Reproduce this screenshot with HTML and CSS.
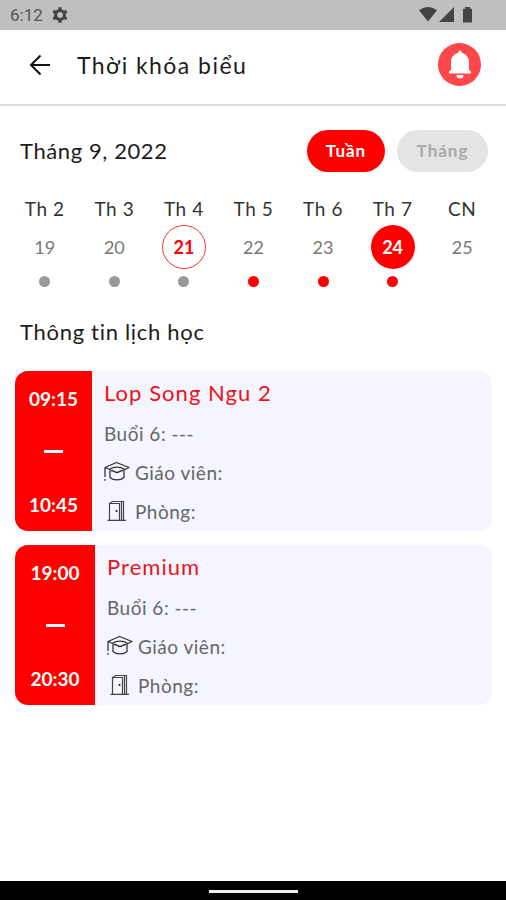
FILE: index.html
```html
<!DOCTYPE html>
<html lang="vi">
<head>
<meta charset="UTF-8" />
<meta name="viewport" content="width=device-width,initial-scale=1" />
<title>Thời khóa biểu</title>
<link rel="stylesheet" href="styles.css">
</head>
<body>
  <!-- Shared icons -->
  <svg class="defs" width="0" height="0">
    <symbol id="cap" viewBox="0 0 26 22">
      <path d="M6 8.500 1 6.500 12.500 1.500 25 6.500 20 9M6 8v8.500c3.500 3.200 10.500 3.200 14 0V8c-3.500-2.500-10.500-2.500-14 0M7 9.500c3 .2 4 2 6 2s3-1.800 6-2M1 6.500V16M1 18v1.800" fill="none" stroke="#333" stroke-width="1.300" stroke-linejoin="round" />
    </symbol>
    <symbol id="door" viewBox="0 0 26 22">
      <path d="M3.500 20.300h18.500M5.500 20V3.500l3-2h11V20M6 3.500h9.500V20M17.500 2v18" fill="none" stroke="#444" stroke-width="1.200" />
      <circle cx="12.500" cy="11" r="1.100" fill="#222" />
    </symbol>
  </svg>

  <div class="statusbar">
    <span class="clock">6:12</span>
    <svg class="gear" width="16" height="16" viewBox="0 0 16 16">
      <circle cx="8" cy="8" r="4.400" fill="none" stroke="#444" stroke-width="3" />
      <path d="M8 .3v3M8 12.700v3M1.300 4.200l2.600 1.500M12.100 10.300l2.600 1.500M1.300 11.800l2.600-1.500M12.100 5.700l2.600-1.500" stroke="#444" stroke-width="3.200" />
    </svg>
    <svg class="signals" width="54" height="16" viewBox="0 0 54 16">
      <path d="M0 3.200Q9-3 18 3.200L9 14.500z" fill="#444" />
      <path d="M20 15 35 0v15z" fill="#444" />
      <path d="M44 1.800h2V0h5v1.800h2V15.500h-9z" fill="#444" />
    </svg>
  </div>

  <header class="header">
    <svg class="back" width="22" height="22" viewBox="0 0 22 22">
      <path d="M21 11H2M11.500 1.500 2 11l9.500 9.500" fill="none" stroke="#111" stroke-width="2" />
    </svg>
    <h1>Thời khóa biểu</h1>
    <div class="bell">
      <svg width="24" height="30" viewBox="0 0 24 30">
        <path d="M12 0.500c1 0 1.500.8 2 2.300 4.500 1.800 7 4.700 7 9v8l2 2V23.500H1v-1.700l2-2v-8c0-4.300 2.500-7.200 7-9 .5-1.500 1-2.300 2-2.300z" fill="#fff" />
        <path d="M8.500 25h7a3.500 3.500 0 0 1-7 0z" fill="#fff" />
      </svg>
    </div>
  </header>

  <main>
    <div class="month-row">
      <h2 class="month">Tháng 9, 2022</h2>
      <button class="tab active">Tuần</button>
      <button class="tab">Tháng</button>
    </div>

    <div class="week">
      <div class="day"><span class="name">Th 2</span><span class="num">19</span><i class="dot"></i></div>
      <div class="day"><span class="name">Th 3</span><span class="num">20</span><i class="dot"></i></div>
      <div class="day"><span class="name">Th 4</span><span class="num today">21</span><i class="dot"></i></div>
      <div class="day"><span class="name">Th 5</span><span class="num">22</span><i class="dot red"></i></div>
      <div class="day"><span class="name">Th 6</span><span class="num">23</span><i class="dot red"></i></div>
      <div class="day"><span class="name">Th 7</span><span class="num selected">24</span><i class="dot red"></i></div>
      <div class="day"><span class="name">CN</span><span class="num">25</span></div>
    </div>

    <h2 class="section-title">Thông tin lịch học</h2>

    <article class="card">
      <div class="time">
        <span>09:15</span><i class="dash"></i><span>10:45</span>
      </div>
      <div class="info">
        <h3>Lop Song Ngu 2</h3>
        <p>Buổi 6: ---</p>
        <p><svg class="icon"><use href="#cap" /></svg>Giáo viên:</p>
        <p><svg class="icon"><use href="#door" /></svg>Phòng:</p>
      </div>
    </article>

    <article class="card">
      <div class="time wide">
        <span>19:00</span><i class="dash"></i><span>20:30</span>
      </div>
      <div class="info">
        <h3>Premium</h3>
        <p>Buổi 6: ---</p>
        <p><svg class="icon"><use href="#cap" /></svg>Giáo viên:</p>
        <p><svg class="icon"><use href="#door" /></svg>Phòng:</p>
      </div>
    </article>
  </main>

  <div class="navbar"><i class="handle"></i></div>
</body>
</html>
```
FILE: styles.css
```css
:root {
  --red: #ff0000;
  --card-bg: #f4f5fe;
}
* { box-sizing: border-box; }
body {
  margin: 0;
  height: 900px;
  display: flex;
  flex-direction: column;
  background: #fff;
  color: #1c1c1c;
  font-family: Lato, "Open Sans", sans-serif;
  overflow: hidden;
}
h1, h2, h3, p { margin: 0; font-weight: 400; white-space: nowrap; }
.defs { position: absolute; }

/* ---------- Status bar ---------- */
.statusbar {
  display: flex;
  align-items: center;
  height: 30px;
  padding: 0 33px 0 10px;
  background: #bfbfbf;
  color: #555;
}
.clock { width: 42px; font-family: Roboto, sans-serif; font-size: 17px; }
.signals { margin-left: auto; }

/* ---------- Header ---------- */
.header {
  display: flex;
  align-items: center;
  height: 76px;
  padding: 0 25px 5px 29px;
  border-bottom: 2px solid #dcdcdc;
}
h1 { margin-left: 26px; font-size: 23px; letter-spacing: 1.45px; }
.bell {
  display: flex;
  align-items: center;
  justify-content: center;
  width: 43px;
  height: 43px;
  margin-left: auto;
  border-radius: 50%;
  background: #ff4648;
}

/* ---------- Calendar ---------- */
main { flex: 1; }
.month-row {
  display: flex;
  align-items: center;
  gap: 12px;
  padding: 24px 18px 0 20px;
}
.month { flex: 1; padding-bottom: 2px; font-size: 22px; letter-spacing: 0.6px; }
.tab {
  width: 91px;
  height: 42px;
  padding: 0 0 2px;
  border: 0;
  border-radius: 21px;
  background: #e4e4e4;
  color: #aaa;
  font: 700 17px Lato, "Open Sans", sans-serif;
  letter-spacing: 1px;
}
.tab.active { width: 78px; background: var(--red); color: #fff; }
.week {
  display: grid;
  grid-template-columns: repeat(7, 1fr);
  height: 117px;
  padding: 25px 9px 0 10px;
}
.day { display: flex; flex-direction: column; align-items: center; }
.name { height: 28px; line-height: 23px; font-size: 19px; letter-spacing: 0.6px; color: #333; }
.num {
  display: flex;
  align-items: center;
  justify-content: center;
  width: 44px;
  height: 44px;
  border-radius: 50%;
  font-size: 18px;
  color: #777;
}
.today { border: 1.5px solid #f33; color: var(--red); font-weight: 700; }
.selected { background: var(--red); color: #fff; font-weight: 700; }
.dot { width: 11px; height: 11px; margin-top: 7px; border-radius: 50%; background: #999; }
.dot.red { background: var(--red); }
.section-title {
  height: 82px;
  padding: 27px 0 0 20px;
  line-height: 32px;
  font-size: 22px;
  letter-spacing: 0.7px;
}

/* ---------- Lessons ---------- */
.card {
  display: flex;
  height: 160px;
  margin: 0 14px 14px 15px;
  border-radius: 13px;
  background: var(--card-bg);
  overflow: hidden;
}
.time {
  display: flex;
  flex-direction: column;
  align-items: center;
  justify-content: space-between;
  width: 77px;
  padding: 16px 0 15px;
  background: var(--red);
  color: #fff;
  font-size: 19px;
  font-weight: 700;
}
.time.wide { width: 80px; }
.dash { width: 19px; height: 3px; background: #fff; }
.info { padding: 4px 0 0 12px; color: #666; }
h3 { height: 39px; line-height: 35px; font-size: 22px; letter-spacing: 1.05px; color: #ee1119; }
.info p { display: flex; align-items: center; height: 39px; font-size: 19px; letter-spacing: 0.5px; }
.icon { width: 26px; height: 22px; margin: -2px 5px 0 0; }

/* ---------- Navigation ---------- */
.navbar {
  display: flex;
  justify-content: center;
  height: 19px;
  padding-top: 9px;
  background: #000;
}
.handle { width: 89px; height: 3px; background: #eee; }
```
